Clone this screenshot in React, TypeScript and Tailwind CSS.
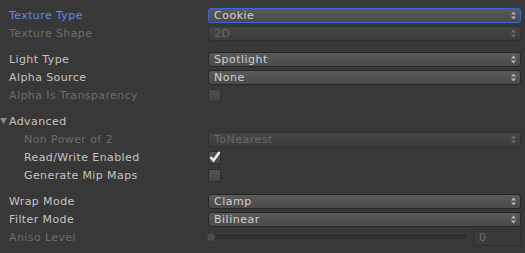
import type { ReactNode } from "react";

const font = { fontFamily: '"DejaVu Sans", "Liberation Sans", sans-serif' };

function Arrows({ dim }: { dim?: boolean }) {
    return (
        <svg width="5" height="9" viewBox="0 0 5 9" className={dim ? "opacity-40" : ""}>
            <path d="M2.5 0.5 L5 3.5 L0 3.5 Z" fill="#b5b5b5" />
            <path d="M2.5 8.5 L5 5.5 L0 5.5 Z" fill="#b5b5b5" />
        </svg>
    );
}

function Dropdown({ value, focused, disabled }: { value: string; focused?: boolean; disabled?: boolean }) {
    return (
        <div
            className={`flex h-[15px] flex-1 items-center justify-between rounded-[3px] border pl-[5px] pr-[4px] ${
                focused
                    ? "border-[#3a67d6] bg-gradient-to-b from-[#5a5a5a] to-[#4a4a4a]"
                    : disabled
                    ? "border-[#303030] bg-gradient-to-b from-[#444444] to-[#3e3e3e]"
                    : "border-[#262626] bg-gradient-to-b from-[#5a5a5a] to-[#4a4a4a]"
            }`}
        >
            <span className={`text-[11px] leading-none tracking-[0.5px] ${disabled ? "text-[#6a6a6a]" : "text-[#d0d0d0]"}`}>
                {value}
            </span>
            <Arrows dim={disabled} />
        </div>
    );
}

function Checkbox({ checked }: { checked?: boolean }) {
    return (
        <div className="relative h-[13px] w-[13px] rounded-[2px] border border-[#2c2c2c] bg-gradient-to-b from-[#555555] to-[#474747]">
            {checked && (
                <svg width="14" height="13" viewBox="0 0 14 13" className="absolute left-[-1px] top-[-2px]">
                    <path d="M2.5 7 L5.5 10.5 L11.5 2" stroke="#f2f2f2" strokeWidth="2.4" fill="none" />
                </svg>
            )}
        </div>
    );
}

function Row({
    label,
    tone = "normal",
    indent,
    children,
}: {
    label: string;
    tone?: "normal" | "dim" | "blue";
    indent?: boolean;
    children?: ReactNode;
}) {
    const color = tone === "blue" ? "text-[#5a8cf2]" : tone === "dim" ? "text-[#6e6e6e]" : "text-[#c4c4c4]";
    return (
        <div className="flex h-[18px] items-center pr-[4px]">
            <div className={`w-[208px] shrink-0 text-[11px] leading-none tracking-[0.4px] ${color} ${indent ? "pl-[24px]" : "pl-[9px]"}`}>
                {label}
            </div>
            <div className="flex flex-1 items-center">{children}</div>
        </div>
    );
}

export default function App() {
    return (
        <div className="h-[253px] w-[525px] bg-[#383838] pt-[6px]" style={font}>
            <Row label="Texture Type" tone="blue">
                <Dropdown value="Cookie" focused />
            </Row>
            <Row label="Texture Shape" tone="dim">
                <Dropdown value="2D" disabled />
            </Row>

            <div className="h-[8px]" />
            <Row label="Light Type">
                <Dropdown value="Spotlight" />
            </Row>
            <Row label="Alpha Source">
                <Dropdown value="None" />
            </Row>
            <Row label="Alpha Is Transparency" tone="dim">
                <div className="opacity-75">
                    <Checkbox />
                </div>
            </Row>

            <div className="h-[8px]" />
            <div className="flex h-[18px] items-center">
                <svg width="7" height="6" viewBox="0 0 7 6" className="mr-[2px]">
                    <path d="M0 0 L7 0 L3.5 6 Z" fill="#8a8a8a" />
                </svg>
                <span className="text-[11px] leading-none tracking-[0.4px] text-[#c4c4c4]">Advanced</span>
            </div>
            <Row label="Non Power of 2" tone="dim" indent>
                <Dropdown value="ToNearest" disabled />
            </Row>
            <Row label="Read/Write Enabled" indent>
                <Checkbox checked />
            </Row>
            <Row label="Generate Mip Maps" indent>
                <Checkbox />
            </Row>

            <div className="h-[8px]" />
            <Row label="Wrap Mode">
                <Dropdown value="Clamp" />
            </Row>
            <Row label="Filter Mode">
                <Dropdown value="Bilinear" />
            </Row>
            <Row label="Aniso Level" tone="dim">
                <div className="flex flex-1 items-center">
                    <div className="relative flex h-[12px] flex-1 items-center">
                        <div className="h-[4px] w-full rounded-full bg-[#313131] shadow-[inset_0_1px_0_#2a2a2a]" />
                        <div className="absolute left-[-2px] top-[1px] h-[10px] w-[10px] rounded-full border border-[#333333] bg-[#4c4c4c]" />
                    </div>
                    <div className="ml-[6px] flex h-[17px] w-[48px] items-center rounded-[2px] border border-[#2e2e2e] bg-[#3a3a3a] pl-[5px] text-[11px] leading-none text-[#6e6e6e]">
                        0
                    </div>
                </div>
            </Row>
        </div>
    );
}
